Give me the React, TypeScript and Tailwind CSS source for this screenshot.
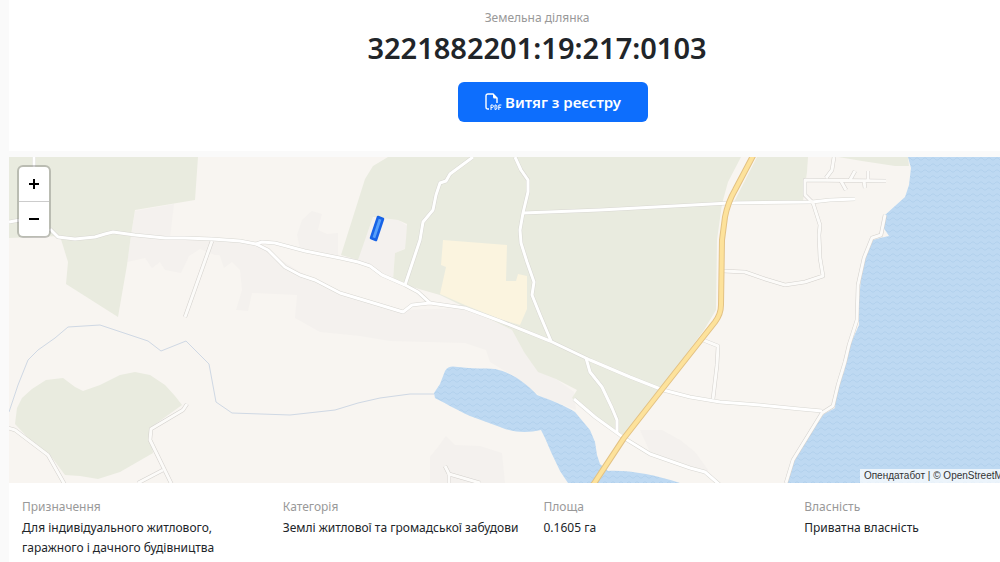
import React from 'react';

interface Detail {
  label: string;
  value: string;
}

const details: Detail[] = [
  { label: 'Призначення', value: 'Для індивідуального житлового, гаражного і дачного будівництва' },
  { label: 'Категорія', value: 'Землі житлової та громадської забудови' },
  { label: 'Площа', value: '0.1605 га' },
  { label: 'Власність', value: 'Приватна власність' },
];

const forests = [
  '9,157 198,157 195,200 135,210 131,235 127,265 118,317 66,284 68,262 60,236 9,238',
  '388,157 741,157 728,182 722,204 717,240 716,310 704,330 662,387 624,435 614,430 572,398 577,390 556,379 538,372 524,352 512,330 440,295 405,285 393,280 395,253 405,249 406,239 407,224 398,220 373,217 358,260 341,255 365,179 373,166',
  '757,157 808,157 807,172 803,201 734,202',
  '838,157 908,157 909,166 895,166 862,161',
  '15,424 17,408 22,398 32,389 46,380 63,378 75,387 83,391 100,385 120,375 135,372 150,375 165,385 175,396 182,405 150,428 153,453 120,472 98,479 80,476 65,475 50,455 30,440',
];

const settlements = [
  '135,211 174,204 170,238 240,240 240,256 215,255 200,249 189,256 181,273 165,270 160,262 152,268 145,258 127,262',
  '215,241 256,244 300,272 340,291 403,310 465,308 512,330 524,352 556,379 574,392 576,410 540,396 510,374 490,362 486,350 465,343 390,341 360,336 320,332 295,318 297,295 252,293 248,311 236,310 242,290 240,270 232,262 224,268',
  '297,235 302,220 312,211 322,214 318,230 327,234 338,233 338,256 300,248',
  '341,257 358,258 373,218 398,220 407,226 406,248 395,253 393,280 370,266',
  '430,483 430,457 438,447 446,436 455,445 480,446 502,453 505,483',
  '640,430 662,430 680,440 695,452 708,470 706,475 650,452',
];

const farmland = '443,240 507,245 506,281 516,281 518,274 527,276 527,309 520,325 500,319 465,305 440,294 446,267 441,265';

const lakes = [
  'M445,371 C448,366 452,366 458,367 C472,369 485,368 495,369 C510,372 525,382 537,395 C548,399 566,406 575,412 L590,430 595,442 597,455 600,464 608,471 C630,470 655,475 680,483 L568,483 560,471 551,452 545,438 541,430 C528,433 514,433 500,427 L470,416 C455,409 443,402 435,398 L434,393 440,384 Z',
  'M908,157 L911,168 909,185 905,197 895,206 885,215 883,227 889,236 880,238 873,240 866,255 861,278 859,300 859,325 851,343 847,357 844,372 836,390 835,408 824,414 808,435 795,458 787,483 1065,483 1065,157 Z',
];

const stream = '9,412 18,385 28,360 38,350 55,338 68,327 100,325 148,341 161,351 186,341 209,364 216,402 232,413 290,415 335,410 358,403 380,398 410,394 434,394';

const roads = [
  '34,157 34,170',
  '9,222 20,220',
  '50,229 58,237 75,239 95,237 105,234 113,232 135,235 165,238 185,238 212,239 240,241 256,244 262,242 275,243 305,251 340,258 358,262 370,266 382,275 405,285 418,292 430,303',
  '256,244 268,250 285,267 300,275 315,280 340,293 370,302 403,312 412,305 430,303 465,308 500,321 550,341 590,360 630,377 663,390 690,397 720,402 760,405 800,409 822,411',
  '473,157 450,174 446,181 440,183 436,195 433,210 423,222 420,240 405,285',
  '515,157 521,170 528,180 528,192 523,213 520,230 521,243 527,262 534,282 532,295 540,315 551,341',
  '523,213 600,210 730,203 812,202 830,200 855,199',
  '586,358 590,372 602,387 612,408 617,420 617,433',
  '574,399 595,417 624,438 650,454 690,468 705,472 720,485',
];

const lanes = [
  '212,241 185,317',
  '703,340 718,346 717,365 713,399',
  '723,271 745,272 765,279 785,285 805,282 823,276 820,258 819,235 820,225 813,203 805,195 805,180 886,181',
  '834,157 832,170 826,178',
  '850,180 855,171',
  '868,180 868,171',
  '841,181 846,190',
  '864,181 865,188',
  '885,215 881,235 872,238 864,258 858,285 857,320 849,345 845,362 838,385 833,406 822,413 793,460 786,483',
  '8,428 15,430 48,455 65,485',
  '187,404 183,410 151,429 150,440 172,485',
  '163,470 138,483',
  '445,466 449,474 480,483',
  '449,474 449,485',
];

const highway = 'M754,154 L735,190 Q728,202 725,217 L722,240 721,305 Q721,314 715,322 L663,388 624,438 593,485';

const PdfIcon: React.FC = () => (
  <svg className="h-[18px] w-[17px]" viewBox="0 0 17 18" fill="none" aria-hidden="true">
    <path d="M4 16H3Q1 16 1 14V3Q1 1 3 1H8L12 5V10" stroke="white" strokeWidth="1.4" />
    <path d="M8 1L12.6 5.6H9.5Q8 5.6 8 4Z" fill="white" />
    <path
      d="M6 17V12H7.4Q8.4 12 8.4 13.2T7.4 14.5H6M10 12V16.5H10.8Q12 16.5 12 14.2T10.8 12H10M13.8 17V12H16.4M13.8 14.4H16"
      stroke="white"
    />
  </svg>
);

const MapCanvas: React.FC = () => (
  <svg
    className="block h-full w-full"
    viewBox="9 157 1056 326"
    preserveAspectRatio="xMinYMin slice"
    fill="none"
    strokeLinejoin="round"
    role="img"
    aria-label="Карта ділянки"
  >
    <defs>
      <pattern id="waves" width="8" height="6" patternUnits="userSpaceOnUse">
        <rect width="8" height="6" fill="#bed9f2" />
        <path d="M0 4L2 4L4 2L6 2L8 4" stroke="#b3d1ed" />
      </pattern>
    </defs>
    <rect x="9" y="157" width="1056" height="326" fill="#f8f5f1" />
    {settlements.map((points) => <polygon key={points} points={points} fill="#f4f1ee" />)}
    {forests.map((points) => <polygon key={points} points={points} fill="#e9ebdf" />)}
    <polygon points={farmland} fill="#fbf4df" />
    <polyline points={stream} stroke="#cfd8e4" />
    {lakes.map((d) => <path key={d} d={d} fill="url(#waves)" />)}

    {/* casings go under every road so the junctions stay open */}
    {roads.map((points) => <polyline key={points} points={points} stroke="#d8d7d2" strokeWidth="4" />)}
    {lanes.map((points) => <polyline key={points} points={points} stroke="#d3d0cc" strokeWidth="4" />)}
    {roads.map((points) => <polyline key={points} points={points} stroke="#ffffff" strokeWidth="3" />)}
    {lanes.map((points) => <polyline key={points} points={points} stroke="#fcfbf9" strokeWidth="3" />)}

    <path d={highway} stroke="#e3c284" strokeWidth="6" />
    <path d={highway} stroke="#fde29b" strokeWidth="4" />

    <polygon points="378,217 383,219 376,240 371,238" fill="#56a0fb" stroke="#1763e6" strokeWidth="2.5" />
  </svg>
);

const DetailItem: React.FC<{ detail: Detail }> = ({ detail }) => (
  <div className="pr-3">
    <dt className="text-[#999999]">{detail.label}</dt>
    <dd className="mt-px text-[#212529]">{detail.value}</dd>
  </div>
);

export default function App() {
  return (
    <div className="min-h-screen overflow-hidden bg-[#fafafa] font-['Noto_Sans','Open_Sans',sans-serif] text-[#212529]">
      <main className="-mr-[65px] ml-[9px]">
        <header className="flex flex-col items-center bg-white pt-2 pb-[29px]">
          <p className="text-[12px] leading-5 text-[#999999]">Земельна ділянка</p>
          <h1 className="text-[29px] leading-10 font-semibold">3221882201:19:217:0103</h1>
          <button
            type="button"
            className="mt-[14px] ml-8 flex h-10 w-[190px] items-center justify-center gap-[3px] rounded-md bg-[#0d6efd] text-[15px] font-semibold text-white"
          >
            <PdfIcon />
            Витяг з реєстру
          </button>
        </header>

        <section className="relative mt-1.5 h-[326px] overflow-hidden">
          <MapCanvas />
          <div className="absolute top-2 left-2 flex w-[34px] flex-col overflow-hidden rounded-md border-2 border-black/20 bg-white bg-clip-padding">
            <button type="button" aria-label="Збільшити" className="flex h-[35px] items-center justify-center border-b border-[#cccccc]">
              <svg className="h-3 w-3" viewBox="0 0 12 12" stroke="black" strokeWidth="2"><path d="M1 6H11M6 1V11" /></svg>
            </button>
            <button type="button" aria-label="Зменшити" className="flex h-[34px] items-center justify-center">
              <svg className="h-3 w-3" viewBox="0 0 12 12" stroke="black" strokeWidth="2"><path d="M1 6H11" /></svg>
            </button>
          </div>
          <div className="absolute -right-2 bottom-0 bg-white/70 px-1 font-['Liberation_Sans',sans-serif] text-[10px] leading-[14px] whitespace-nowrap text-[#333333]">
            <a href="#opendatabot">Опендатабот</a> | © <a href="#osm">OpenStreetMap</a> contributors
          </div>
        </section>

        <dl className="grid grid-cols-4 bg-white pt-[14px] pb-4 pl-[13px] text-[12px] leading-5">
          {details.map((detail) => <DetailItem key={detail.label} detail={detail} />)}
        </dl>
      </main>
    </div>
  );
}
